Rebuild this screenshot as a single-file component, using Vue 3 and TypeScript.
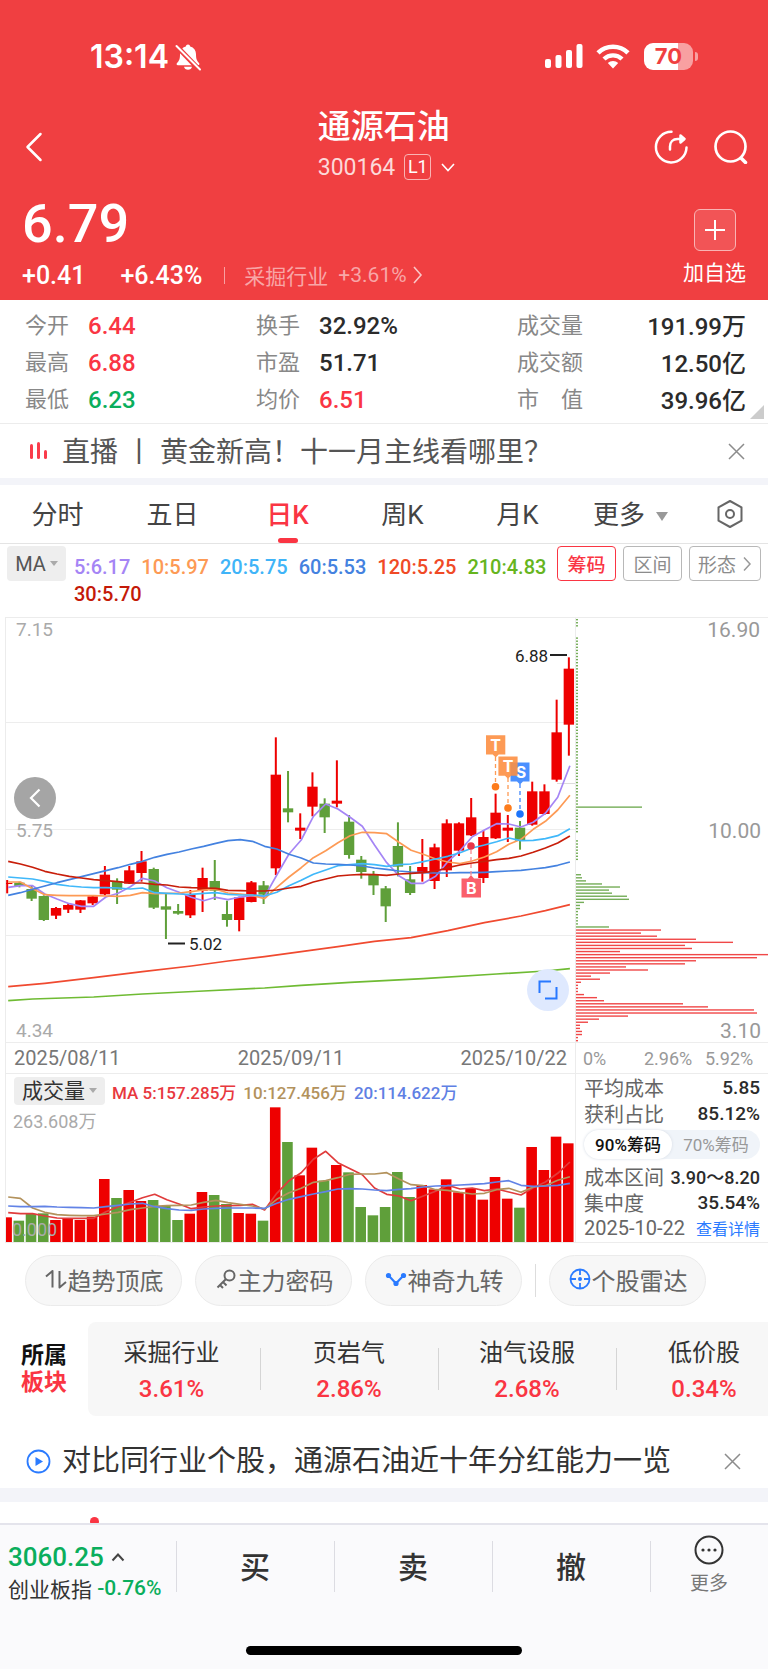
<script setup lang="ts">
import { ref } from 'vue'

type Candle = [up: number, high: number, top: number, bottom: number, low: number]

interface Quote {
  label: string
  value: string
  tone: string
}

const quotes: Quote[] = [
  { label: '今开', value: '6.44', tone: 'rise' },
  { label: '换手', value: '32.92%', tone: '' },
  { label: '成交量', value: '191.99万', tone: '' },
  { label: '最高', value: '6.88', tone: 'rise' },
  { label: '市盈', value: '51.71', tone: '' },
  { label: '成交额', value: '12.50亿', tone: '' },
  { label: '最低', value: '6.23', tone: 'fall' },
  { label: '均价', value: '6.51', tone: 'rise' },
  { label: '市　值', value: '39.96亿', tone: '' },
]

const tabs = ['分时', '五日', '日K', '周K', '月K']
const activeTab = ref('日K')
const range = ref('90')

const averages = [
  { text: '5:6.17', color: '#a585f5' },
  { text: '10:5.97', color: '#fd9a55' },
  { text: '20:5.75', color: '#40b4f8' },
  { text: '60:5.53', color: '#4482e0' },
  { text: '120:5.25', color: '#f04a26' },
  { text: '210:4.83', color: '#66b51e' },
  { text: '30:5.70', color: '#c41a08' },
]

// Price values are stored in thirds of a unit below the 600 mark.
const STEP = 12.21
const candleX = (i: number): number => 7.2 + STEP * i
const priceY = (v: number): number => 600 + v / 3
const volumeY = (v: number): number => 1060 + v / 3

const candles: Candle[] = [
  [1, 840, 849, 852, 880], [0, 845, 848, 858, 862], [0, 858, 867, 896, 903], [0, 886, 888, 960, 963],
  [1, 921, 924, 947, 957], [1, 910, 915, 929, 939], [1, 900, 901, 929, 939], [1, 886, 889, 910, 915],
  [1, 798, 824, 883, 886], [0, 835, 843, 869, 912], [1, 798, 811, 851, 852], [1, 753, 784, 819, 845],
  [0, 803, 807, 923, 927], [0, 880, 919, 929, 1017], [0, 912, 933, 941, 944], [1, 870, 884, 946, 954],
  [1, 803, 834, 872, 936], [0, 780, 843, 872, 900], [0, 902, 942, 960, 980], [1, 890, 892, 960, 994],
  [1, 843, 847, 906, 907], [0, 843, 856, 884, 912], [1, 412, 524, 805, 825], [0, 513, 625, 637, 667],
  [1, 640, 683, 692, 717], [1, 517, 560, 620, 649], [0, 595, 611, 652, 699], [1, 481, 602, 611, 622],
  [0, 645, 665, 765, 776], [0, 768, 779, 816, 836], [0, 813, 824, 856, 885], [0, 858, 865, 919, 966],
  [0, 667, 738, 800, 829], [0, 798, 838, 879, 885], [1, 717, 801, 817, 845], [1, 731, 742, 843, 867],
  [1, 658, 670, 811, 831], [1, 667, 670, 752, 768], [1, 594, 652, 706, 708], [1, 692, 711, 834, 849],
  [1, 581, 638, 715, 717], [1, 645, 683, 692, 726], [0, 663, 683, 722, 749], [1, 545, 574, 674, 677],
  [1, 553, 574, 642, 645], [1, 299, 397, 539, 545], [1, 172, 206, 374, 467],
]

const volumes: number[] = [
  472, 482, 462, 460, 480, 476, 480, 470, 357, 414, 390, 423, 420, 438, 480, 461, 396, 405, 432, 459, 461, 482, 142, 246,
  346, 263, 362, 315, 337, 441, 466, 441, 336, 411, 375, 388, 358, 397, 384, 419, 351, 416, 443, 261, 330, 230, 250,
]

const trace = (values: number[], y: (v: number) => number): string =>
  values.map((v, i) => `${(candleX(i) + 1).toFixed(1)},${y(v).toFixed(1)}`).join(' ')

const sparse = (pairs: [number, number][]): string =>
  pairs.map(([i, v]) => `${(candleX(i) + 1).toFixed(1)},${priceY(v).toFixed(1)}`).join(' ')

const priceLines = [
  {
    color: '#6fbb33',
    points: sparse([[0, 1202], [2, 1197], [7, 1191], [11, 1182], [16, 1173], [21, 1164], [24, 1156], [28, 1147], [34, 1136], [40, 1122], [44, 1113], [46, 1106]]),
  },
  {
    color: '#f04a30',
    points: sparse([[0, 1160], [3, 1150], [7, 1133], [11, 1115], [15, 1098], [18, 1083], [21, 1070], [24, 1055], [27, 1040], [30, 1024], [33, 1013], [36, 992], [39, 968], [42, 948], [44, 932], [46, 914]]),
  },
  {
    color: '#a585f5',
    points: trace([862, 857, 857, 882, 897, 911, 919, 919, 891, 880, 860, 835, 843, 863, 877, 892, 902, 892, 899, 891, 887, 890, 825, 762, 720, 649, 612, 627, 652, 679, 735, 788, 827, 850, 850, 829, 785, 752, 710, 690, 671, 672, 681, 667, 640, 592, 497], priceY),
  },
  {
    color: '#fd9a55',
    points: trace([846, 846, 866, 884, 886, 887, 887, 887, 888, 889, 886, 878, 881, 880, 879, 875, 870, 868, 879, 882, 886, 896, 862, 831, 803, 773, 752, 728, 707, 697, 698, 701, 727, 751, 763, 777, 786, 791, 783, 771, 755, 733, 718, 688, 664, 630, 586], priceY),
  },
  {
    color: '#40b8fa',
    points: trace([831, 834, 837, 844, 853, 858, 861, 863, 863, 864, 867, 864, 878, 880, 882, 883, 880, 878, 883, 885, 885, 888, 877, 857, 841, 823, 810, 797, 794, 791, 794, 799, 794, 792, 785, 777, 769, 758, 744, 735, 725, 714, 722, 721, 716, 707, 686], priceY),
  },
  {
    color: '#4482e0',
    points: trace([886, 878, 868, 858, 848, 839, 830, 821, 812, 803, 793, 784, 772, 763, 756, 747, 739, 730, 722, 719, 724, 739, 747, 763, 774, 789, 792, 793, 795, 798, 804, 808, 813, 816, 818, 819, 819, 818, 818, 817, 815, 813, 811, 807, 803, 796, 786], priceY),
  },
  {
    color: '#c81e0a',
    points: trace([784, 792, 802, 814, 822, 829, 834, 839, 842, 845, 849, 849, 853, 855, 861, 863, 864, 865, 871, 872, 873, 873, 870, 864, 859, 846, 837, 828, 825, 823, 824, 826, 822, 820, 818, 813, 803, 795, 789, 784, 779, 775, 768, 757, 744, 729, 708], priceY),
  },
]

const volumeLines = [
  {
    color: '#e03c3c',
    points: trace([458, 461, 461, 468, 474, 475, 475, 475, 455, 440, 427, 413, 403, 419, 432, 446, 441, 438, 437, 436, 433, 450, 400, 362, 338, 298, 274, 308, 326, 344, 384, 403, 408, 422, 408, 394, 376, 387, 384, 392, 387, 396, 405, 383, 366, 340, 306], volumeY),
  },
  {
    color: '#b3925c',
    points: trace([411, 415, 444, 457, 464, 466, 467, 467, 462, 457, 449, 444, 439, 437, 436, 435, 427, 421, 428, 433, 438, 447, 418, 398, 385, 367, 362, 353, 343, 342, 342, 338, 357, 374, 377, 389, 391, 397, 402, 400, 389, 385, 397, 381, 377, 361, 350], volumeY),
  },
  {
    color: '#6283e6',
    points: trace([438, 440, 440, 439, 441, 442, 443, 444, 440, 436, 432, 430, 440, 446, 450, 451, 447, 445, 444, 444, 444, 445, 430, 418, 410, 402, 395, 387, 386, 387, 390, 392, 388, 386, 381, 378, 377, 375, 373, 371, 366, 362, 376, 379, 378, 376, 370], volumeY),
  },
]

const bandLengths: number[] = [
  5, 6, 10, 26, 44, 33, 36, 51, 53, 8, 4, 4, 2, 2, 2, 2, 2, 33,
  85, 65, 81, 120, 157, 109, 116, 44, 192, 181, 120, 109, 50, 72, 34, 15, 24, 5, 2, 2, 2,
  8, 21, 28, 107, 132, 178, 181, 52, 23, 12, 4, 4, 6, 6, 2, 2,
]
const emptyBands = [4, 5, 6, 71, 72, 80, 81, 82, 83]
const chips = Array.from({ length: 139 }, (_, k) => {
  const length = k >= 84 ? bandLengths[k - 84] : k === 62 ? 66 : emptyBands.includes(k) ? 0 : 2
  return { y: 616.6 + k * 3.073, length, up: k >= 102 }
}).filter((c) => c.length > 0)

const sectors = [
  { name: '采掘行业', change: '3.61%' },
  { name: '页岩气', change: '2.86%' },
  { name: '油气设服', change: '2.68%' },
  { name: '低价股', change: '0.34%' },
]
</script>

<template>
  <div class="page">
    <header class="top">
      <div class="status">
        <div class="clock">
          <span>13:14</span>
          <svg width="28" height="28" viewBox="0 0 28 28" aria-hidden="true">
            <path fill="#fff" d="M14 1.500c1.200 0 2 .8 2.200 1.900 3.700 1 5.800 3.900 5.800 7.800 0 5 1 6.600 3 8.800.8.900.4 2.300-.9 2.300H3.900c-1.300 0-1.700-1.400-.9-2.300 2-2.200 3-3.800 3-8.800 0-3.900 2.100-6.800 5.800-7.800C12 2.300 12.800 1.500 14 1.500z" />
            <path fill="#fff" d="M10 23.800h8c-.3 1.800-2 3-4 3s-3.700-1.200-4-3z" />
            <path stroke="#f03f41" stroke-width="5" d="M1 1.500 26 27.500" />
            <path stroke="#fff" stroke-width="2" stroke-linecap="round" d="M2.500 3 26 26.500" />
          </svg>
        </div>
        <div class="signals">
          <svg width="38" height="25" viewBox="0 0 38 25" fill="#fff" aria-hidden="true">
            <rect x="0" y="15" width="6" height="9" rx="2" />
            <rect x="10.500" y="11" width="6" height="13" rx="2" />
            <rect x="21" y="6" width="6" height="18" rx="2" />
            <rect x="31.500" y="0" width="6" height="24" rx="2" />
          </svg>
          <svg width="34" height="25" viewBox="0 0 34 25" fill="none" aria-hidden="true">
            <path stroke="#fff" stroke-width="4.600" d="M2 8.800a21.500 21.500 0 0 1 30 0" />
            <path stroke="#fff" stroke-width="4.400" d="M8 15a13 13 0 0 1 18 0" />
            <path fill="#fff" d="M17 24.500l-5.200-5.500a7.500 7.500 0 0 1 10.400 0z" />
          </svg>
          <div class="battery"><span>70</span></div>
          <i class="nub"></i>
        </div>
      </div>

      <div class="titlebar">
        <button class="icon-button" aria-label="返回">
          <svg width="18" height="30" viewBox="0 0 18 30" fill="none"><path stroke="#fff" stroke-width="2.500" stroke-linecap="round" stroke-linejoin="round" d="M15.500 2 2.500 15l13 13" /></svg>
        </button>
        <div class="title">
          <h1>通源石油</h1>
          <button class="code">
            <span>300164</span><b>L1</b>
            <svg width="14" height="9" viewBox="0 0 14 9" fill="none"><path stroke="#fff" stroke-width="1.600" d="m1 1 6 6.500L13 1" /></svg>
          </button>
        </div>
        <div class="tools">
          <button class="icon-button" aria-label="分享">
            <svg width="34" height="34" viewBox="0 0 34 34" fill="none" stroke="#fff" stroke-width="2.500" stroke-linecap="round" stroke-linejoin="round">
              <path d="M17.500 1.800A15.300 15.300 0 1 0 32.500 17.500" /><path d="M16 19.500v-3c0-4.500 3-7.500 7.500-7.500H30" /><path fill="#fff" d="m26.500 5.500 4 3.500-4 3.500z" />
            </svg>
          </button>
          <button class="icon-button" aria-label="搜索">
            <svg width="34" height="34" viewBox="0 0 34 34" fill="none" stroke="#fff" stroke-width="2.700" stroke-linecap="round">
              <circle cx="16.500" cy="16.500" r="15" /><path stroke-width="3.500" d="m27.500 28.500 4 4" />
            </svg>
          </button>
        </div>
      </div>

      <div class="quote">
        <div>
          <div class="price">6.79</div>
          <div class="changes">
            <span class="delta">+0.41</span><span class="percent">+6.43%</span>
            <a href="#industry" class="industry">
              采掘行业<span>+3.61%</span>
              <svg width="10" height="18" viewBox="0 0 10 18" fill="none"><path stroke="#fff" stroke-width="1.600" d="m1 1 7 8-7 8" /></svg>
            </a>
          </div>
        </div>
        <button class="favorite">
          <i><svg width="22" height="22" viewBox="0 0 22 22"><path stroke="#fff" stroke-width="2" d="M11 1v20M1 11h20" /></svg></i>
          加自选
        </button>
      </div>
    </header>

    <section class="stats">
      <dl>
        <div v-for="q in quotes" :key="q.label">
          <dt>{{ q.label }}</dt>
          <dd :class="q.tone">{{ q.value }}</dd>
        </div>
      </dl>
      <i class="corner"></i>
    </section>

    <section class="notice">
      <svg class="live" width="20" height="18" viewBox="0 0 20 18" fill="#fa3c4b" aria-hidden="true">
        <rect x="1" y="2" width="3" height="15" rx="1.500" /><rect x="8" y="0" width="3" height="17" rx="1.500" /><rect x="15" y="8" width="3" height="9" rx="1.500" />
      </svg>
      <a href="#live">直播 丨 黄金新高！十一月主线看哪里？</a>
      <button class="close" aria-label="关闭"><svg width="17" height="17" viewBox="0 0 17 17"><path stroke="#8c8c8c" stroke-width="1.500" d="m1 1 15 15M16 1 1 16" /></svg></button>
    </section>

    <nav class="tabs">
      <button v-for="t in tabs" :key="t" :class="{ active: t === activeTab }" @click="activeTab = t">{{ t }}</button>
      <button class="more">更多<i class="down"></i></button>
      <button class="settings" aria-label="设置">
        <svg width="28" height="30" viewBox="0 0 28 30" fill="none" stroke="#666" stroke-width="2" stroke-linejoin="round">
          <path d="M14 2 25.500 8.300v13.400L14 28 2.500 21.700V8.300z" /><circle cx="14" cy="15" r="4" />
        </svg>
      </button>
    </nav>

    <section class="indicator">
      <button class="ma">MA<i class="down"></i></button>
      <div class="averages">
        <span v-for="a in averages" :key="a.text" :style="{ color: a.color }">{{ a.text }}</span>
      </div>
      <div class="overlays">
        <button class="on">筹码</button>
        <button>区间</button>
        <button>形态<svg width="9" height="16" viewBox="0 0 9 16" fill="none"><path stroke="#999" stroke-width="1.500" d="m1 1.500 6 6.500-6 6.500" /></svg></button>
      </div>
    </section>

    <section class="charts">
      <div class="kline">
        <svg class="plot" viewBox="6 618 569 455">
          <g stroke="#ededed" stroke-width="1">
            <path d="M6 722.500h569M6 829.500h569M6 935.500h569M6 1042.500h569" />
            <path stroke="#dcdcdc" d="M557 783.500h18" />
          </g>
          <g class="axis">
            <text x="16" y="636">7.15</text>
            <text x="16" y="837">5.75</text>
            <text x="16" y="1037">4.34</text>
          </g>
          <g v-for="(c, i) in candles" :key="i" :fill="c[0] ? '#ee0000' : '#5f9f3a'">
            <rect :x="candleX(i) - 1" :y="priceY(c[1])" width="2" :height="(c[4] - c[1]) / 3" />
            <rect :x="candleX(i) - 5.2" :y="priceY(c[2])" width="10.400" :height="(c[3] - c[2]) / 3" />
          </g>
          <polyline v-for="l in priceLines" :key="l.color" :points="l.points" :stroke="l.color" fill="none" stroke-width="1.700" stroke-linejoin="round" />
          <g class="extreme">
            <path d="M168 943.500h17M550 655h17" stroke="#222" stroke-width="2" />
            <text x="189" y="950">5.02</text>
            <text x="515" y="662">6.88</text>
          </g>
          <g stroke-width="1.300" stroke-dasharray="4 3">
            <path stroke="#fd9a55" d="M495.500 757v26M508 778v26" />
            <path stroke="#3f86fb" d="M520 784v26" />
            <path stroke="#f78a90" d="M471 850v25" />
          </g>
          <circle cx="495.500" cy="786.700" r="3.800" fill="#fd7c1c" />
          <circle cx="508" cy="808" r="3.800" fill="#fd7c1c" />
          <circle cx="520" cy="814" r="3.800" fill="#1c74fb" />
          <circle cx="471" cy="846" r="3.800" fill="#e83648" />
          <path fill="#4a90ff" d="M510.500 762.500h19v19h-6.500l-3 3-3-3h-6.500z" />
          <text class="mark" x="521" y="778">S</text>
          <path fill="#fd8f42" fill-opacity=".9" d="M486 735.300h19.300v19.200h-6.600l-3 3-3-3H486zM498.400 756.500h19.200v19.200h-6.600l-3 3-3-3h-6.600z" />
          <path fill="#fa5f6b" d="M461.500 878.500h6.500l3-3.500 3 3.500h7v19h-19.500z" />
          <g class="mark">
            <text x="495.600" y="750.500">T</text><text x="508" y="771.500">T</text><text x="471.200" y="893.500">B</text>
          </g>
          <g class="date">
            <text x="14" y="1065">2025/08/11</text>
            <text x="291" y="1065" text-anchor="middle">2025/09/11</text>
            <text x="567" y="1065" text-anchor="end">2025/10/22</text>
          </g>
        </svg>
        <button class="previous" aria-label="向左"><svg width="12" height="20" viewBox="0 0 12 20" fill="none"><path stroke="#fff" stroke-width="2.200" d="M10.500 1.500 2 10l8.500 8.500" /></svg></button>
        <button class="expand" aria-label="全屏"><svg width="20" height="20" viewBox="0 0 20 20" fill="none"><path stroke="#2878ff" stroke-width="2" d="M1.500 13V1.500H13M18.500 7v11.500H7" /></svg></button>
      </div>

      <div class="distribution">
        <svg class="plot" viewBox="576 618 192 455">
          <path d="M576 1042.500h192" stroke="#ededed" />
          <rect v-for="c in chips" :key="c.y" x="576" :y="c.y - 0.700" :width="c.length" height="1.400" :fill="c.up ? '#f04848' : '#75ad58'" />
          <g class="scale">
            <text x="760" y="637">16.90</text><text x="761" y="838">10.00</text><text x="761" y="1038">3.10</text>
          </g>
          <g class="share">
            <text x="583" y="1065">0%</text><text x="644" y="1065">2.96%</text><text x="705" y="1065">5.92%</text>
          </g>
        </svg>
      </div>

      <div class="volume">
        <div class="volume-head">
          <button>成交量<i class="down"></i></button>
          <span class="v5">MA 5:157.285万</span><span class="v10">10:127.456万</span><span class="v20">20:114.622万</span>
        </div>
        <svg class="plot" viewBox="6 1105 569 137">
          <rect v-for="(v, i) in volumes" :key="i" :x="candleX(i) - 5.900" :y="volumeY(v)" width="10.600" :height="1242 - volumeY(v)" :fill="candles[i][0] ? '#ee0000' : '#5f9f3a'" />
          <polyline v-for="l in volumeLines" :key="l.color" :points="l.points" :stroke="l.color" fill="none" stroke-width="1.700" stroke-linejoin="round" />
          <g class="amount"><text x="13" y="1128">263.608万</text><text x="12" y="1236">0.000</text></g>
        </svg>
      </div>

      <div class="cost">
        <p><span>平均成本</span><b>5.85</b></p>
        <p><span>获利占比</span><b>85.12%</b></p>
        <div class="toggle">
          <button :class="{ chosen: range === '90' }" @click="range = '90'">90%筹码</button>
          <button :class="{ chosen: range === '70' }" @click="range = '70'">70%筹码</button>
        </div>
        <p><span>成本区间</span><b class="span">3.90～8.20</b></p>
        <p><span>集中度</span><b>35.54%</b></p>
        <p><span>2025-10-22</span><a href="#detail">查看详情</a></p>
      </div>
    </section>

    <section class="features">
      <button>
        <svg width="24" height="24" viewBox="0 0 24 24" fill="none" stroke="#666" stroke-width="2" stroke-linejoin="round"><path d="M2 9.500 8.500 4v16.500M22 15l-6.500 5.500V4" /></svg>趋势顶底
      </button>
      <button>
        <svg width="24" height="24" viewBox="0 0 24 24" fill="none" stroke="#666" stroke-width="2"><circle cx="15.500" cy="8.500" r="5" /><path d="M12 12 3.500 20.500M6 18l3 3M9 15l3.500 3.500" /></svg>主力密码
      </button>
      <button>
        <svg width="24" height="24" viewBox="0 0 24 24" fill="none" stroke="#2b7bff" stroke-width="2.200"><path d="m4.500 8.500 7.500 8 7.500-8" /><g fill="#2b7bff" stroke="none"><circle cx="4.500" cy="8.500" r="2.600" /><circle cx="12" cy="16.500" r="2.600" /><circle cx="19.500" cy="8.500" r="2.600" /></g></svg>神奇九转
      </button>
      <i class="rule"></i>
      <button>
        <svg width="24" height="24" viewBox="0 0 24 24" fill="none" stroke="#2b7bff" stroke-width="1.800"><circle cx="12" cy="12" r="9.500" /><path d="M12 2.500V8M12 16v5.500M2.500 12H8M16 12h5.500" /><circle cx="12" cy="12" r="2" fill="#2b7bff" stroke="none" /></svg>个股雷达
      </button>
    </section>

    <section class="sectors">
      <h2>所属<em>板块</em></h2>
      <ul>
        <li v-for="s in sectors" :key="s.name">
          <a href="#sector">{{ s.name }}<b>{{ s.change }}</b></a>
        </li>
      </ul>
    </section>

    <section class="news">
      <svg class="play" width="25" height="25" viewBox="0 0 25 25" fill="none" aria-hidden="true"><circle cx="12.500" cy="12.500" r="11" stroke="#2b7bff" stroke-width="1.800" /><path fill="#2b7bff" d="M9.500 8v9l7.500-4.500z" /></svg>
      <a href="#news">对比同行业个股，通源石油近十年分红能力一览</a>
      <button class="close" aria-label="关闭"><svg width="17" height="17" viewBox="0 0 17 17"><path stroke="#8c8c8c" stroke-width="1.500" d="m1 1 15 15M16 1 1 16" /></svg></button>
    </section>
    <div class="peek"><i></i></div>

    <footer class="bottom">
      <div class="trade">
        <button class="index">
          <span class="level">3060.25<svg width="14" height="10" viewBox="0 0 14 10" fill="none"><path stroke="#444" stroke-width="2" d="m1.500 8.500 5.500-6 5.500 6" /></svg></span>
          <span class="board">创业板指 <b>-0.76%</b></span>
        </button>
        <button class="action">买</button>
        <button class="action">卖</button>
        <button class="action">撤</button>
        <button class="other">
          <svg width="30" height="30" viewBox="0 0 30 30"><circle cx="15" cy="15" r="13.500" fill="none" stroke="#333" stroke-width="2" /><g fill="#333"><circle cx="9" cy="15" r="1.600" /><circle cx="15" cy="15" r="1.600" /><circle cx="21" cy="15" r="1.600" /></g></svg>
          更多
        </button>
      </div>
      <div class="home"></div>
    </footer>
  </div>
</template>

<style>
body {
  background: #fff;
}
</style>

<style scoped>
.page {
  font-family: Roboto, "Noto Sans CJK SC", sans-serif;
  color: #333;
  background: #fff;
}
.page * {
  box-sizing: border-box;
}
button {
  margin: 0;
  padding: 0;
  border: 0;
  background: none;
  font: inherit;
  color: inherit;
}
a {
  color: inherit;
  text-decoration: none;
}
svg {
  display: block;
  flex: none;
}
b,
em {
  font-weight: 500;
  font-style: normal;
}
h1,
h2,
dl,
dd,
p,
ul {
  margin: 0;
  padding: 0;
}

.top {
  background: #f03f41;
  color: #fff;
}
.status {
  display: flex;
  justify-content: space-between;
  height: 104px;
  padding: 43px 70px 34px 90px;
}
.clock {
  display: flex;
  align-items: center;
  gap: 5px;
  font: 600 32px/28px Inter, sans-serif;
}
.signals {
  display: flex;
  align-items: center;
}
.signals svg:nth-child(2) {
  margin: 0 14px 0 13px;
}
.battery {
  width: 49px;
  height: 27px;
  border-radius: 9px;
  background: linear-gradient(90deg, #fff 70%, #f8a0a1 70%);
  color: #f03f41;
  font: 700 22px/27px Inter, sans-serif;
  text-align: center;
}
.nub {
  width: 3px;
  height: 9px;
  margin-left: 2px;
  border-radius: 0 3px 3px 0;
  background: #f8a0a1;
}

.titlebar {
  display: grid;
  grid-template-columns: 1fr auto 1fr;
  align-items: center;
  height: 86px;
  padding: 0 20px 0 25px;
}
.titlebar > .icon-button {
  justify-self: start;
}
.title {
  align-self: start;
}
.title h1 {
  font-size: 33px;
  font-weight: 500;
  line-height: 46px;
}
.code {
  display: flex;
  align-items: center;
  height: 34px;
  font-size: 23px;
  color: #fcd9d9;
}
.code b {
  width: 27px;
  height: 26px;
  margin: 0 10px 0 9px;
  border: 1px solid #f9b4b4;
  border-radius: 4px;
  color: #fff;
  font-size: 18px;
  font-weight: 400;
  line-height: 24px;
}
.tools {
  display: flex;
  justify-content: flex-end;
  gap: 26px;
}

.quote {
  display: flex;
  justify-content: space-between;
  height: 110px;
  padding: 0 22px;
}
.price {
  padding-top: 1px;
  font-size: 54px;
  font-weight: 500;
  line-height: 66px;
}
.changes {
  display: flex;
  align-items: center;
  height: 36px;
  font-size: 25px;
  font-weight: 500;
}
.percent {
  margin-left: 35px;
}
.industry {
  position: relative;
  display: flex;
  align-items: center;
  margin-left: 22px;
  padding-left: 20px;
  color: #f8a6a7;
  font-size: 21px;
  font-weight: 400;
}
.industry::before {
  content: "";
  position: absolute;
  left: 0;
  width: 1px;
  height: 17px;
  background: #f8a0a1;
}
.industry span {
  margin: 0 6px 0 10px;
}
.industry svg {
  opacity: 0.7;
}
.favorite {
  display: flex;
  flex-direction: column;
  align-items: center;
  padding-top: 19px;
  font-size: 21px;
  line-height: 44px;
}
.favorite i {
  display: grid;
  place-items: center;
  width: 42px;
  height: 42px;
  border: 1px solid #f9b4b4;
  border-radius: 6px;
  background: #f25456;
}

.stats {
  position: relative;
  padding: 7px 22px 5px 25px;
  border-bottom: 1px solid #ececec;
}
.stats dl {
  display: grid;
  grid-template-columns: 231fr 261fr 229fr;
}
.stats dl div {
  display: flex;
  align-items: center;
  height: 37px;
}
.stats dt {
  min-width: 63px;
  padding-bottom: 6px;
  color: #888;
  font-size: 22px;
}
.stats dd {
  color: #2b2b2b;
  font-size: 24px;
  font-weight: 500;
}
.stats dl div:nth-child(3n) {
  justify-content: space-between;
}
.stats dl div:nth-child(3n) dd {
  padding-bottom: 3px;
}
.stats dd.rise {
  color: #fa3543;
}
.stats dd.fall {
  color: #0aae5c;
}
.corner {
  position: absolute;
  right: 4px;
  bottom: 4px;
  border: 7px solid transparent;
  border-right-color: #ccc;
  border-bottom-color: #ccc;
}

.notice,
.news {
  display: flex;
  align-items: center;
  height: 61px;
  padding: 0 23px 0 29px;
  border-bottom: 7px solid #f3f4f9;
  font-size: 29px;
  line-height: 54px;
  white-space: nowrap;
}
.notice {
  color: #555;
}
.notice a,
.news a {
  flex: 1;
  margin-left: 13px;
}
.notice a {
  padding-top: 4px;
  font-size: 28px;
  line-height: 50px;
}
.close {
  padding: 4px 0;
}

.tabs {
  display: grid;
  grid-template-columns: repeat(5, 115fr) 111fr 82fr;
  height: 59px;
  border-bottom: 1px solid #e4e4e4;
  font-size: 26px;
  color: #444;
}
.tabs button {
  position: relative;
  padding-bottom: 4px;
}
.tabs .active {
  color: #fa3543;
  font-weight: 500;
}
.tabs .active::after {
  content: "";
  position: absolute;
  left: 50%;
  bottom: 0;
  width: 20px;
  height: 5px;
  margin-left: -10px;
  border-radius: 3px;
  background: #fa3543;
}
.down {
  display: inline-block;
  margin-left: 11px;
  border: 6px solid transparent;
  border-top: 9px solid #999;
  border-bottom: 0;
}
.tabs .down {
  margin-bottom: 3px;
}
.tabs .settings {
  display: grid;
  place-items: center;
  padding: 0 0 0 5px;
}

.indicator {
  display: flex;
  align-items: flex-start;
  min-height: 73px;
  padding: 2px 7px 0;
}
.ma {
  display: flex;
  align-items: center;
  justify-content: center;
  flex: none;
  width: 59px;
  height: 35px;
  border-radius: 4px;
  background: #eee;
  color: #555;
  font-size: 20px;
}
.ma .down,
.volume-head .down {
  margin-left: 4px;
  border-width: 5px 4px 0;
  border-top-color: #aaa;
}
.volume-head .down {
  margin-top: 3px;
}
.averages {
  display: flex;
  flex: 1;
  flex-wrap: wrap;
  column-gap: 11px;
  margin: 8px 0 0 8px;
  font-size: 20px;
  font-weight: 500;
  line-height: 27px;
}
.overlays {
  display: flex;
  flex: none;
  gap: 7px;
}
.overlays button {
  display: flex;
  align-items: center;
  justify-content: center;
  gap: 7px;
  min-width: 59px;
  height: 35px;
  padding: 0 8px;
  border: 1px solid #b8b8b8;
  border-radius: 4px;
  color: #8c8c8c;
  font-size: 19px;
}
.overlays .on {
  border-color: #fa3543;
  color: #fa3543;
  font-weight: 500;
}

.charts {
  display: grid;
  grid-template-columns: 570fr 193fr;
  margin-left: 5px;
}
.charts > div {
  position: relative;
  border-top: 1px solid #ececec;
  border-left: 1px solid #ececec;
}
.plot {
  width: 100%;
  height: auto;
}
.axis {
  fill: #aaa;
  font-size: 19px;
}
.extreme {
  fill: #222;
  font-size: 17px;
}
.mark {
  fill: #fff;
  font: 700 16px Inter, sans-serif;
  text-anchor: middle;
}
.date {
  fill: #777;
  font-size: 20px;
}
.scale {
  fill: #999;
  font-size: 21px;
  text-anchor: end;
}
.share {
  fill: #999;
  font-size: 18px;
}
.amount {
  fill: #aaa;
  font-size: 18px;
}
.previous,
.expand {
  position: absolute;
  display: grid;
  place-items: center;
  width: 42px;
  height: 42px;
  border-radius: 50%;
}
.previous {
  left: 8px;
  top: 159px;
  background: #a5a5a5;
}
.expand {
  right: 6px;
  bottom: 62px;
  background: #dfe9fe;
}
.charts > .volume,
.charts > .cost {
  border-bottom: 1px solid #ececec;
}
.volume-head {
  display: flex;
  align-items: center;
  gap: 7px;
  height: 31px;
  padding: 3px 0 0 8px;
  font-size: 17px;
  font-weight: 500;
  white-space: nowrap;
}
.volume-head button {
  display: flex;
  align-items: center;
  justify-content: center;
  width: 91px;
  height: 28px;
  padding-bottom: 4px;
  border-radius: 4px;
  background: #eee;
  font-size: 21px;
  font-weight: 400;
}
.v5 {
  color: #e8383e;
}
.v10 {
  color: #b3925c;
}
.v20 {
  color: #5f80e4;
}
.cost {
  padding: 0 8px;
}
.cost p {
  display: flex;
  align-items: center;
  justify-content: space-between;
  height: 26px;
  color: #666;
  font-size: 20px;
  white-space: nowrap;
}
.cost b {
  color: #2b2b2b;
  font-size: 19px;
}
.cost .span {
  font-size: 18px;
}
.cost a {
  color: #2b7bff;
  font-size: 16px;
}
.toggle {
  display: grid;
  grid-template-columns: 1fr 1fr;
  height: 29px;
  margin: 4px 0;
  border-radius: 15px;
  background: #f0f4f9;
  color: #999;
  font-size: 17px;
}
.toggle button {
  padding-bottom: 2px;
  border-radius: 15px;
}
.toggle .chosen {
  background: #fff;
  box-shadow: 0 0 3px #d5dbe4;
  color: #111;
  font-weight: 500;
}

.features {
  display: flex;
  align-items: center;
  gap: 13px;
  padding: 12px 25px 0;
}
.features button {
  display: flex;
  align-items: center;
  justify-content: center;
  width: 157px;
  height: 51px;
  padding-bottom: 3px;
  border: 1px solid #ebebeb;
  border-radius: 26px;
  background: #f7f7f7;
  color: #666;
  font-size: 24px;
}
.features .rule {
  width: 1px;
  height: 33px;
  background: #ddd;
}

.sectors {
  display: flex;
  align-items: center;
  margin-top: 16px;
  overflow: hidden;
}
.sectors h2 {
  flex: none;
  width: 88px;
  padding-left: 21px;
  color: #111;
  font-size: 23px;
  font-weight: 700;
  line-height: 27px;
}
.sectors em {
  display: block;
  color: #fa3543;
  font-weight: 700;
}
.sectors ul {
  display: grid;
  flex: 1;
  grid-template-columns: 172fr 178fr 178fr 176fr;
  align-items: center;
  height: 94px;
  margin-right: -24px;
  padding-top: 4px;
  border-radius: 8px;
  background: #f7f7f7;
  list-style: none;
}
.sectors li {
  position: relative;
  font-size: 24px;
  line-height: 36px;
  text-align: center;
}
.sectors li:first-child {
  padding-right: 5px;
}
.sectors li + li::before {
  content: "";
  position: absolute;
  left: 0;
  top: 13px;
  width: 1px;
  height: 42px;
  background: #d5d5d5;
}
.sectors li b {
  display: block;
  color: #fa3543;
}

.news {
  height: 72px;
  padding: 18px 27px 0 26px;
  border: 0;
}
.news a {
  margin-left: 11px;
}
.peek {
  height: 35px;
  overflow: hidden;
  border-top: 14px solid #f3f4f9;
}
.peek i {
  display: block;
  width: 9px;
  height: 9px;
  margin: 15px 0 0 90px;
  border-radius: 50%;
  background: #fa3543;
}

.bottom {
  padding-bottom: 14px;
  border-top: 2px solid #e4e4ec;
  background: #fafafc;
}
.trade {
  display: grid;
  grid-template-columns: 176fr 158fr 158fr 158fr 118fr;
  height: 84px;
}
.trade button + button {
  position: relative;
}
.trade button + button::before {
  content: "";
  position: absolute;
  left: 0;
  top: 16px;
  width: 1px;
  height: 51px;
  background: #dcdce2;
}
.index {
  padding: 7px 0 0 8px;
  text-align: left;
}
.index span {
  display: flex;
  align-items: center;
  white-space: pre;
}
.level {
  gap: 7px;
  height: 34px;
  color: #0aae5c;
  font-size: 26px;
  font-weight: 500;
}
.board {
  height: 28px;
  font-size: 21px;
}
.board b {
  color: #0aae5c;
}
.trade .action {
  padding-bottom: 4px;
  font-size: 30px;
  font-weight: 500;
}
.other {
  display: flex;
  flex-direction: column;
  align-items: center;
  padding-top: 10px;
  color: #777;
  font-size: 19px;
  line-height: 38px;
}
.home {
  width: 36%;
  height: 9px;
  margin: 37px auto 0;
  border-radius: 5px;
  background: #000;
}
</style>
